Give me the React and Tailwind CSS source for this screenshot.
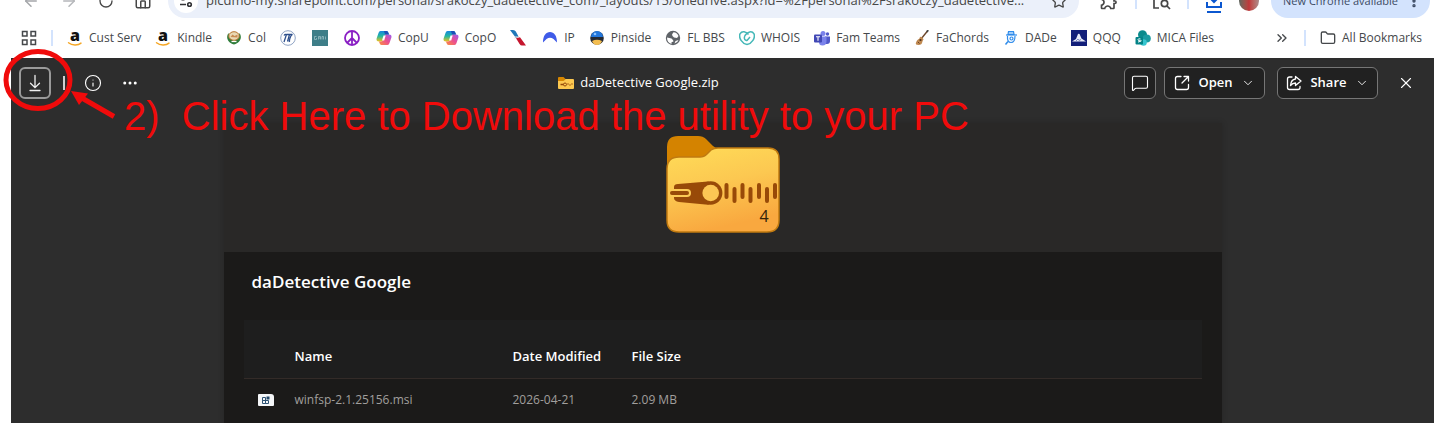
import { ArrowLeft, ArrowRight, ChevronDown, ChevronsRight, Ellipsis, EllipsisVertical, Folder, House, Info, MessageSquare, RotateCw, Star, X } from "lucide-react";
import { MdOutlineExtension } from "react-icons/md";

const AmazonIcon = () => (
  <svg viewBox="0 0 16 16" className="h-4 w-4 overflow-visible">
    <text x="8" y="11" textAnchor="middle" fontFamily="Open Sans" fontWeight="800" fontSize="16" fill="#111">a</text>
    <path d="M1.500 12.800C5 15.500 11 15.700 14 13.100" fill="none" stroke="#f5a623" strokeWidth="1.400" strokeLinecap="round" />
  </svg>
);

const CollegeIcon = () => (
  <svg viewBox="0 0 16 16" className="h-4 w-4">
    <path d="M2.500 3C-.5 7 1.500 12.500 8 14.500 14.500 12.500 16.500 7 13.500 3L12 8 8 11 4 8Z" fill="#2f7d3b" />
    <ellipse cx="8" cy="6" rx="5.200" ry="4.300" fill="#e9d9b5" stroke="#b8742f" />
    <path d="M4.500 7l2-2.500 2 1.500 3-1.500v3z" fill="#c98b52" />
    <path d="M5.500 11.500h5" stroke="#fff" strokeWidth="1.200" />
  </svg>
);

const PiIcon = () => (
  <svg viewBox="0 0 16 16" className="h-4 w-4">
    <circle cx="8" cy="8" r="7.300" fill="#fff" stroke="#8fa3c4" />
    <path d="M4 12L6.500 4.500Q5 4 4 5.500M6.500 4.500h6Q11 5 10 8T9.500 12M9.500 4.500L7.500 11.500" fill="none" stroke="#2d4f8c" strokeWidth="1.300" />
  </svg>
);

const TealIcon = () => (
  <svg viewBox="0 0 16 16" className="h-4 w-4">
    <path d="M0 0H16V16H0Z" fill="#3e7e88" />
    <path d="M4.500 6.500h-2v3h2v-1.500M6.500 9.500v-3h2v3M6.500 8h2M10 9.500v-3h1.500v3M13.500 6.500v3" stroke="#a5c6cb" strokeWidth=".7" fill="none" />
  </svg>
);

const PeaceIcon = () => (
  <svg viewBox="0 0 16 16" className="h-4 w-4" fill="none" stroke="#8a1fc4" strokeWidth="1.800">
    <circle cx="8" cy="8" r="7" />
    <path d="M8 1V15M8 8L3 13M8 8L13 13" />
  </svg>
);

const CopilotIcon = () => (
  <svg viewBox="0 0 16 16" className="h-4 w-4">
    <defs>
      <linearGradient id="copA" x1="0" y1="0" x2="0" y2="1">
        <stop offset="0" stopColor="#1686e0" />
        <stop offset=".5" stopColor="#25b8a0" />
        <stop offset="1" stopColor="#f3c21b" />
      </linearGradient>
      <linearGradient id="copB" x1="1" y1="0" x2="0" y2="1">
        <stop offset="0" stopColor="#9a5cf0" />
        <stop offset=".5" stopColor="#ec4f8e" />
        <stop offset="1" stopColor="#fb923c" />
      </linearGradient>
    </defs>
    <path d="M4.500 1h6q1.500 0 2 2l.5 1.500h-2q-1.500 0-2 1.500L7 11.500H3Q0 11.500.6 8.500L2.500 3Q3 1 4.500 1z" fill="url(#copA)" />
    <path d="M11.500 15h-6q-1.500 0-2-2L3 11.500h2q1.500 0 2-1.500L9 4.500h4q3 0 2.400 3L13.500 13q-.5 2-2 2z" fill="url(#copB)" />
    <path d="M8 1h2.500q1.500 0 2 2l.5 1.500h-2.500Q9 4.500 8.500 3z" fill="#1d4fb8" />
    <path d="M7.500 5.500h2.200l-1.500 5H6z" fill="#fff" />
  </svg>
);

const AirlineIcon = () => (
  <svg viewBox="0 0 16 16" className="h-4 w-4">
    <path d="M0 0h3q2 0 2.800 1.500L8.500 6.500 6 8z" fill="#1f78b8" />
    <path d="M4.500 8.500L9 6.800 5.500 6z" fill="#b8c4cd" />
    <path d="M6 8.300l4-1L16 15.500h-4q-1.500 0-2.400-1.500z" fill="#c5162e" />
  </svg>
);

const ArchIcon = () => (
  <svg viewBox="0 0 16 16" className="h-4 w-4">
    <path d="M1 12.500C1 5.500 4 2 8 2s7 3.500 7 10.500L11.500 9Q8 6.500 4.500 9Z" fill="#3f5be8" />
  </svg>
);

const PinsideIcon = () => (
  <svg viewBox="0 0 16 16" className="h-4 w-4">
    <circle cx="8" cy="8" r="6.800" fill="#262a33" />
    <path d="M2 7a6 6 0 0 1 12 0z" fill="#2377dc" />
    <circle cx="6" cy="4" r="1.300" fill="#8fc4ff" />
    <path d="M3 11q5-2.500 10 0-1.500 4-5 4t-5-4z" fill="#f3bd4f" />
  </svg>
);

const GlobeIcon = () => (
  <svg viewBox="0 0 16 16" className="h-4 w-4">
    <circle cx="8" cy="8" r="7.200" fill="#5f6368" />
    <path d="M8.500 2.300q3.500.2 5 3.700l-1.500 2-3-.5L7.500 6 7 4.500z" fill="#fff" />
    <path d="M2 7.500l4.500 1 1.500 1.500.5 1.500-2 .8v1.700Q2 12.500 2 7.500z" fill="#fff" />
    <path d="M9.500 13.500l1-2.500 3-1q-1 3-4 3.500z" fill="#fff" />
  </svg>
);

const GoDaddyIcon = () => (
  <svg viewBox="0 0 16 16" className="h-4 w-4" fill="none" stroke="#45b8b8" strokeWidth="1.500">
    <path d="M8 14.500C3 13.500-.5 8 1 3.800 3 .5 7 1.500 9.500 4.500" />
    <path d="M8 14.500C13 13.500 16.500 8 15 3.800 13 .5 8.500 1.500 6 5.500 4.500 8.500 6 11.500 8.500 10L11 7" />
  </svg>
);

const TeamsIcon = () => (
  <svg viewBox="0 0 16 16" className="h-4 w-4">
    <circle cx="9" cy="3.500" r="2.500" fill="#7b83eb" />
    <circle cx="13.500" cy="4" r="1.700" fill="#5059c9" />
    <path d="M11 6.500h5v4.500q0 3-3 3h-2z" fill="#5059c9" />
    <path d="M5 6.500h7.500V11q0 4.500-4 4.500T5 11z" fill="#7b83eb" />
    <rect y="4.500" width="8" height="8" rx="1" fill="#4148b5" />
    <path d="M2 6.700h4M4 6.700v4" stroke="#fff" strokeWidth="1.100" />
  </svg>
);

const GuitarIcon = () => (
  <svg viewBox="0 0 16 16" className="h-4 w-4">
    <path d="M7 9L13.500 1" stroke="#6b452a" strokeWidth="1.300" />
    <path d="M12.800 1.800L14.300.2" stroke="#444" strokeWidth="1.800" />
    <path d="M6 7q1-.5 2 .3T9.500 9.500q-1 1-1.200 2.500Q8 15 4.500 15T2 12.500t2-3Q5.500 9 6 7z" fill="#c08a52" />
    <circle cx="6.500" cy="10" r="1.100" fill="#4d2e18" />
    <path d="M3.800 11.800l1.700 1.700" stroke="#6b4023" />
  </svg>
);

const DetectiveIcon = () => (
  <svg viewBox="0 0 16 16" className="h-4 w-4" fill="none" stroke="#2f8ceb" strokeWidth="1.200">
    <path d="M5 4.500L5.500 1.500h5l.5 3z" fill="#9ccbfa" />
    <path d="M3 5h11" />
    <path d="M4.500 6q-.5 6.500 3.500 6.500T12 6" />
    <circle cx="8.500" cy="8.500" r="1.500" />
    <path d="M5 11.500L2.500 14.500" strokeWidth="1.500" />
  </svg>
);

const QqqIcon = () => (
  <svg viewBox="0 0 16 16" className="h-4 w-4">
    <path d="M0 0H16V16H0Z" fill="#121f7a" />
    <path d="M1 11.500L5 9 7 4q1.500-1 2 1l1.500 3.500 4.500 3z" fill="#e8ecf8" />
    <path d="M5 11l2-2 1 1.500 2-1" stroke="#7d88c4" fill="none" />
  </svg>
);

const SharePointIcon = () => (
  <svg viewBox="0 0 16 16" className="h-4 w-4">
    <circle cx="7.500" cy="4.800" r="4.500" fill="#0a8a8c" />
    <circle cx="11.700" cy="8.500" r="4.100" fill="#1a9ba1" />
    <circle cx="8.500" cy="12.500" r="3.300" fill="#37c6d0" />
    <rect x=".5" y="7" width="7.500" height="7.500" rx="1" fill="#038387" />
    <path d="M5.500 9q-2.500-.7-2.500.7t2.500 1.100-2.500 1.300" stroke="#fff" fill="none" />
  </svg>
);

const AppsIcon = () => (
  <svg viewBox="0 0 16 16" className="h-4 w-4" fill="none" stroke="#45484b" strokeWidth="1.500">
    <path d="M1.500 1.500h4.500v4.500H1.500zM10 1.500h4.500v4.500H10zM1.500 10h4.500v4.500H1.500zM10 10h4.500v4.500H10z" />
  </svg>
);

const TuneIcon = () => (
  <svg viewBox="0 0 14 14" className="h-3.5 w-3.5" fill="none" stroke="#303134" strokeWidth="1.600">
    <circle cx="4" cy="4" r="1.800" />
    <path d="M7 4h6M1 10.500h6" />
    <circle cx="10.500" cy="10.500" r="1.800" />
  </svg>
);

const LensIcon = () => (
  <svg viewBox="0 0 18 18" className="h-[18px] w-[18px]" fill="none" stroke="#474747" strokeWidth="1.700">
    <path d="M6 16H1V1h14v5" />
    <circle cx="11.500" cy="11.500" r="3.200" />
    <path d="M14 14l3 3" />
  </svg>
);

const DownloadsIcon = () => (
  <svg viewBox="0 0 18 24" className="h-6 w-[18px]" fill="none" stroke="#0b57d0" strokeWidth="2">
    <path d="M9 2v11M4.500 8.500L9 13l4.500-4.500M2 13v5h14v-5M2 23h14" />
  </svg>
);

const DownloadIcon = () => (
  <svg viewBox="0 0 18 18" className="h-[18px] w-[18px]" fill="none" stroke="#f0f0f0" strokeWidth="1.300" strokeLinecap="round">
    <path d="M9 1.500v12M4.500 9.200L9 13.700l4.500-4.500M4 16.500h10" />
  </svg>
);

const OpenIcon = () => (
  <svg viewBox="0 0 16 16" className="h-4 w-4" fill="none" stroke="currentColor" strokeWidth="1.300" strokeLinecap="round" strokeLinejoin="round">
    <path d="M7 1.500H3.500q-2 0-2 2v9q0 2 2 2h9q2 0 2-2V9.500M10 1.500h4.500V6M14.500 1.500L8 8" />
  </svg>
);

const ShareIcon = () => (
  <svg viewBox="0 0 16 16" className="h-4 w-4" fill="none" stroke="currentColor" strokeWidth="1.300" strokeLinecap="round" strokeLinejoin="round">
    <path d="M6 2H3.500q-2 0-2 2v8.500q0 2 2 2H12q2 0 2-2v-1" />
    <path d="M9.500 1.500L15 6l-5.500 4.500V8Q6.500 8 4.500 10.500 5 4.500 9.500 4z" />
  </svg>
);

const SmallZipIcon = () => (
  <svg viewBox="0 0 16 14" className="h-3.5 w-4">
    <path d="M0 2Q0 1 1 1h4.500L7.500 3 6 5H0z" fill="#d68600" />
    <path d="M0 5h5.500L7.500 3H15q1 0 1 1v8q0 1-1 1H1q-1 0-1-1z" fill="#fcc850" />
    <path d="M2.500 8.500h3.500M9.500 8h1M11.500 9h1M13.500 8h1" stroke="#95480a" strokeWidth="1.300" />
    <circle cx="7" cy="8.500" r="1.500" fill="#fcc850" stroke="#95480a" />
  </svg>
);

const MsiIcon = () => (
  <svg viewBox="0 0 16 12" className="h-3 w-4">
    <path d="M1 0h12q3 0 3 3v8q0 1-1 1H1q-1 0-1-1V1q0-1 1-1z" fill="#f4f6f8" />
    <path d="M4.500 3.500h3v3h-3zM4.500 6.500h3v3h-3zM7.500 6.500h3v3h-3z" fill="none" stroke="#2d5273" />
    <path d="M8.500 2.500h3v3h-3z" fill="#24486a" />
  </svg>
);

const ZipFolder = () => (
  <svg viewBox="0 0 114 98" className="h-[98px] w-[114px]">
    <defs>
      <linearGradient id="folderFront" x1="0" y1="0" x2=".3" y2="1">
        <stop offset="0" stopColor="#ffdc58" />
        <stop offset=".5" stopColor="#fcc851" />
        <stop offset="1" stopColor="#f9a83f" />
      </linearGradient>
    </defs>
    <path d="M1 32V12Q1 1 12 1H32Q37 1 40 4L47 11Q49 13 52 13L50 40H1Z" fill="#d48300" />
    <path
      d="M1 34Q1 22 13 22H34Q38 22 41 19L45 15Q48 13 52 13H102Q113 13 113 24V85Q113 97 101 97H13Q1 97 1 85Z"
      fill="url(#folderFront)"
      stroke="#c07a10"
      strokeWidth="1.500"
    />
    <path d="M8 52Q8 49 12 49L42 46.500A11.700 11.700 0 0 1 42 69.700L13 67Q8 66 8 63Z" fill="#984a08" />
    <circle cx="44.700" cy="58" r="11.700" fill="#984a08" />
    <circle cx="44.700" cy="58" r="8.300" fill="#fcc654" />
    <rect x="3" y="54" width="22" height="8" rx="4" fill="#fcca55" />
    <rect x="4" y="56" width="19" height="4" rx="2" fill="#984a08" />
    <path
      d="M60.500 50V62M68.500 54V66M76.500 50V62M84.500 54V66M93 50V62M101 54V66M109 50V62"
      stroke="#984a08"
      strokeWidth="4"
      strokeLinecap="round"
    />
    <text x="98" y="87" textAnchor="middle" fontFamily="Open Sans" fontSize="16" fill="#33230a">4</text>
  </svg>
);

const bookmarks = [
  { icon: AmazonIcon, label: "Cust Serv" },
  { icon: AmazonIcon, label: "Kindle" },
  { icon: CollegeIcon, label: "Col" },
  { icon: PiIcon },
  { icon: TealIcon },
  { icon: PeaceIcon },
  { icon: CopilotIcon, label: "CopU" },
  { icon: CopilotIcon, label: "CopO" },
  { icon: AirlineIcon },
  { icon: ArchIcon, label: "IP" },
  { icon: PinsideIcon, label: "Pinside" },
  { icon: GlobeIcon, label: "FL BBS" },
  { icon: GoDaddyIcon, label: "WHOIS" },
  { icon: TeamsIcon, label: "Fam Teams" },
  { icon: GuitarIcon, label: "FaChords" },
  { icon: DetectiveIcon, label: "DADe" },
  { icon: QqqIcon, label: "QQQ" },
  { icon: SharePointIcon, label: "MICA Files" },
];

const files = [{ name: "winfsp-2.1.25156.msi", modified: "2026-04-21", size: "2.09 MB" }];

const BrowserToolbar = () => (
  <div className="-mt-4 flex h-[34px] items-center pr-2.5 pl-[22px] text-[#474747]">
    <div className="flex items-center gap-5">
      <button aria-label="Back" className="text-[#a5a7aa]"><ArrowLeft className="h-[18px] w-[18px]" /></button>
      <button aria-label="Forward" className="text-[#b5b7ba]"><ArrowRight className="h-[18px] w-[18px]" /></button>
      <button aria-label="Reload"><RotateCw className="h-4 w-4" /></button>
      <button aria-label="Home"><House className="h-[18px] w-[18px]" /></button>
    </div>
    <div className="ml-4 flex h-[34px] min-w-0 flex-1 items-center gap-2 rounded-full bg-[#ebf0fa] pr-3 pl-1.5">
      <button aria-label="Site information" className="flex h-6 w-6 shrink-0 items-center justify-center rounded-full bg-white"><TuneIcon /></button>
      <input
        aria-label="Address"
        readOnly
        className="min-w-0 flex-1 bg-transparent text-[13px] outline-none"
        value="picdmo-my.sharepoint.com/personal/srakoczy_dadetective_com/_layouts/15/onedrive.aspx?id=%2Fpersonal%2Fsrakoczy_dadetective..."
      />
      <button aria-label="Bookmark this tab"><Star className="h-4 w-4" /></button>
    </div>
    <div className="ml-5 flex items-center gap-4">
      <button aria-label="Extensions"><MdOutlineExtension className="h-5 w-5" /></button>
      <span className="h-4 w-0.5 bg-[#d3e3fd]" />
      <button aria-label="Search with Lens"><LensIcon /></button>
      <span className="h-4 w-0.5 bg-[#d3e3fd]" />
      <button aria-label="Downloads"><DownloadsIcon /></button>
      <button aria-label="Profile" className="h-5 w-5 rounded-full bg-linear-to-r from-[#5c6660] via-[#c0353a] to-[#a98c8c]" />
    </div>
    <button className="ml-3 flex h-[34px] items-center gap-2 rounded-full bg-[#d3e3fd] pr-2 pl-3 text-[11px] font-medium text-[#3c4a63]">
      New Chrome available
      <EllipsisVertical className="h-4 w-4" strokeWidth={3} />
    </button>
  </div>
);

const BookmarksBar = () => (
  <nav aria-label="Bookmarks" className="flex h-10 items-center pr-[18px] pl-[21px] text-[12px] whitespace-nowrap text-[#45484b]">
    <button aria-label="Apps"><AppsIcon /></button>
    <span className="mx-3.5 h-4 w-0.5 bg-[#d3e3fd]" />
    <div className="flex items-center">
      {bookmarks.map((item, i) => (
        <a key={i} href="#" className={item.label ? "flex items-center gap-1.5 pr-3.5" : "pr-4"}>
          <item.icon />
          {item.label}
        </a>
      ))}
    </div>
    <button aria-label="More bookmarks" className="ml-auto"><ChevronsRight className="h-4 w-4" /></button>
    <span className="mx-3.5 h-4 w-0.5 bg-[#d3e3fd]" />
    <button className="flex items-center gap-1.5">
      <Folder className="h-4 w-4" />
      All Bookmarks
    </button>
  </nav>
);

const ViewerBar = () => (
  <header className="flex h-[49px] items-center justify-between pr-3 pl-2 text-[13px] text-white">
    <div className="flex w-[134px] items-center gap-3">
      <button aria-label="Download" className="flex h-8 w-8 items-center justify-center rounded-md border-2 border-[#9a9a9a]"><DownloadIcon /></button>
      <span className="h-3.5 w-0.5 bg-[#d0d0d0]" />
      <button aria-label="Details" className="flex w-8 justify-center"><Info className="h-[18px] w-[18px]" strokeWidth={1.5} /></button>
      <button aria-label="More" className="flex justify-center"><Ellipsis className="h-[18px] w-[18px]" strokeWidth={2} /></button>
    </div>
    <h1 className="flex items-center gap-1.5 font-medium">
      <SmallZipIcon />
      daDetective Google.zip
    </h1>
    <div className="flex items-center gap-3">
      <div className="flex gap-2">
        <button aria-label="Comments" className="flex h-8 w-8 items-center justify-center rounded-md border border-[#767676] bg-[#212121]">
          <MessageSquare className="h-[18px] w-[18px]" strokeWidth={1.5} />
        </button>
        <button className="flex h-8 w-[101px] items-center justify-center gap-2 rounded-md border border-[#767676] bg-[#212121] font-semibold">
          <OpenIcon />
          Open
          <ChevronDown className="h-3.5 w-3.5" strokeWidth={1.5} />
        </button>
      </div>
      <button className="flex h-8 w-[101px] items-center justify-center gap-2 rounded-md border border-[#767676] bg-[#212121] font-semibold">
        <ShareIcon />
        Share
        <ChevronDown className="h-3.5 w-3.5" strokeWidth={1.5} />
      </button>
      <button aria-label="Close" className="flex h-8 w-8 items-center justify-center"><X className="h-[18px] w-[18px]" strokeWidth={1.5} /></button>
    </div>
  </header>
);

const ZipPreview = () => (
  <section className="mx-auto mt-4 flex w-full max-w-[998px] flex-1 flex-col bg-[#292827] shadow-[0_0_6px_rgba(0,0,0,0.2)]">
    <div className="flex h-[129px] items-center justify-center pb-2">
      <ZipFolder />
    </div>
    <div className="flex-1 bg-[#1b1a19] px-5">
      <h2 className="px-2 py-4 text-[17px] leading-7 font-semibold text-white">daDetective Google</h2>
      <table className="mt-2 w-full table-fixed text-left text-[12px]">
        <thead className="border-b border-[#332b28] bg-[#1e1e1e] text-[13px] text-white">
          <tr className="h-[58px]">
            <th className="w-[51px]" aria-label="Type" />
            <th className="w-[218px] pt-4 font-semibold">Name</th>
            <th className="w-[119px] pt-4 font-semibold">Date Modified</th>
            <th className="pt-4 font-semibold">File Size</th>
          </tr>
        </thead>
        <tbody className="text-[#a19f9d]">
          {files.map((file) => (
            <tr key={file.name} className="h-11">
              <td className="pl-3.5"><MsiIcon /></td>
              <td>{file.name}</td>
              <td>{file.modified}</td>
              <td>{file.size}</td>
            </tr>
          ))}
        </tbody>
      </table>
    </div>
  </section>
);

// Red marker drawn over the viewer to point at the download button
const Callout = () => (
  <div className="pointer-events-none absolute top-12 left-0 text-[#f00b0b]">
    <svg viewBox="0 0 120 72" className="h-[72px] w-[120px]" fill="none" stroke="currentColor" strokeWidth="5">
      <ellipse cx="38" cy="32" rx="32" ry="28.500" />
      <path d="M114 68.500L81 49.500" />
      <path d="M71 43l17 2.500-9 11.500z" fill="currentColor" stroke="none" />
    </svg>
    <p className="absolute top-11 left-[124px] font-['Liberation_Sans',sans-serif] text-[40px] leading-12 whitespace-pre">2)  Click Here to Download the utility to your PC</p>
  </div>
);

export default function App() {
  return (
    <div className="relative flex min-h-screen flex-col overflow-hidden bg-white font-['Open_Sans','Noto_Sans',sans-serif]">
      <BrowserToolbar />
      <BookmarksBar />
      <main className="mr-1.5 ml-[11px] flex flex-1 flex-col bg-[#2d2d2d]">
        <ViewerBar />
        <ZipPreview />
      </main>
      <Callout />
    </div>
  );
}
